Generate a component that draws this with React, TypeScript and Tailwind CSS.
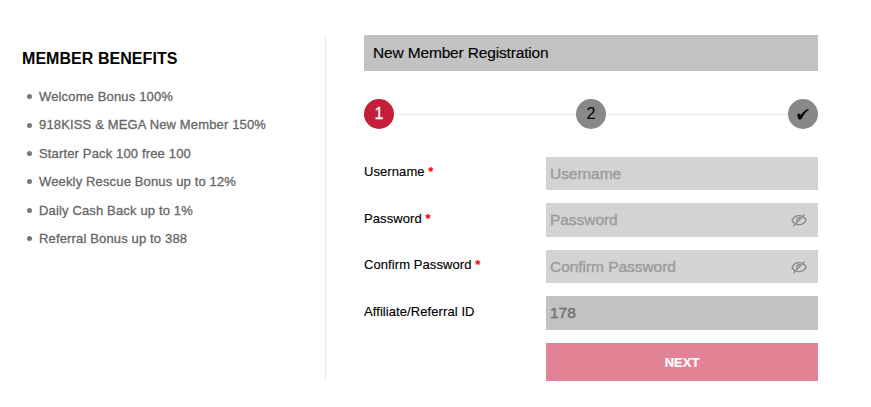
const benefits = [
    "Welcome Bonus 100%",
    "918KISS & MEGA New Member 150%",
    "Starter Pack 100 free 100",
    "Weekly Rescue Bonus up to 12%",
    "Daily Cash Back up to 1%",
    "Referral Bonus up to 388",
]

const fields = [
    { label: "Username", placeholder: "Username", required: true, secret: false },
    { label: "Password", placeholder: "Password", required: true, secret: true },
    { label: "Confirm Password", placeholder: "Confirm Password", required: true, secret: true },
]

const EyeOff = () => (
    <svg className="h-4 w-4" viewBox="0 0 16 16" fill="none" stroke="#888" strokeWidth="1.3" strokeLinecap="round">
        <path d="M5.800 12.300c3.900 1 7.500-.7 9.200-4.100-.5-1.400-1.400-2.600-2.800-3.300M10.200 3.900C6.200 2.900 2.900 4.800 1 8.200c.5 1.300 1.400 2.400 2.600 3.100" />
        <path d="M6.200 9.300c-.9-1.200-.4-3.100 1.200-3.500.6-.1 1.100 0 1.600.3" />
        <path d="M2.700 13.800 13.300 2.600" />
    </svg>
)

const Steps = () => (
    <div className="mt-7 flex h-[30px] items-center text-base text-black">
        <span className="flex h-[30px] w-[30px] items-center justify-center rounded-full bg-[#c41e3a] text-white [-webkit-text-stroke:0.3px]">1</span>
        <span className="mt-px h-px flex-1 bg-[#e9e9e9]" />
        <span className="flex h-[30px] w-[30px] items-center justify-center rounded-full bg-[#888]">2</span>
        <span className="mt-px h-px flex-1 bg-[#e9e9e9]" />
        <span className="flex h-[30px] w-[30px] items-center justify-center rounded-full bg-[#888]">
            <svg className="h-[11px] w-3" viewBox="0 0 13 12" fill="black" stroke="black" strokeWidth=".5">
                <path d="M.4 6.300C1.300 5 2.900 4.900 3.500 6l.5 1.300C6.100 4 8.600 1.500 12 .3l.5.600C9.300 3.200 6.800 6.400 5.100 10.200c-.6 1.200-3.100 1.600-3.600.3C1.100 9 .9 7.700.4 6.300Z" />
            </svg>
        </span>
    </div>
)

const App = () => {
    return (
        <div className="flex h-[407px] w-[871px] bg-white pt-[35px] font-['Liberation_Sans',Arial,sans-serif]">
            <aside className="h-[346px] w-[326px] border-r border-[#e9e9e9] pl-[22px] pt-3">
                <h2 className="text-base font-bold leading-[23px] tracking-[0.05px] text-black">MEMBER BENEFITS</h2>
                <ul className="mt-[12.5px] text-[13px] tracking-[0.15px] text-[#666] [-webkit-text-stroke:0.3px]">
                    {benefits.map((item) => (
                        <li key={item} className="flex h-[28.400px] items-center">
                            <span className="ml-[5px] mr-[7px] h-[5px] w-[5px] rounded-full bg-[#777]" />
                            {item}
                        </li>
                    ))}
                </ul>
            </aside>
            <main className="ml-[38px] w-[454px]">
                <h1 className="flex h-9 items-center bg-[#c2c2c2] px-[9px] text-[15.5px] tracking-[-0.16px] text-black [-webkit-text-stroke:0.15px]">New Member Registration</h1>
                <Steps />
                <form className="mt-[27.900px] flex flex-col gap-[13px] text-[13px] text-black">
                    {fields.map((field) => (
                        <div key={field.label} className="flex h-[33.500px]">
                            <label className="w-[182px] pt-[5.300px] tracking-[0.08px] [-webkit-text-stroke:0.15px]">
                                {field.label} {field.required && <span className="font-bold text-[#f00]">*</span>}
                            </label>
                            <div className="flex flex-1 items-center bg-[#d3d3d3] pl-1 pr-[11px]">
                                <input
                                    type={field.secret ? "password" : "text"}
                                    placeholder={field.placeholder}
                                    className="min-w-0 flex-1 bg-transparent pb-px text-[15.5px] tracking-[-0.05px] outline-none [-webkit-text-stroke:0.4px] placeholder:text-[#9c9c9c]"
                                />
                                {field.secret && <EyeOff />}
                            </div>
                        </div>
                    ))}
                    <div className="flex h-[33.500px]">
                        <label className="w-[182px] pt-[5.300px] tracking-[0.08px] [-webkit-text-stroke:0.15px]">Affiliate/Referral ID</label>
                        <input readOnly value="178" className="min-w-0 flex-1 bg-[#c2c2c2] px-1 pb-px text-[15.5px] text-[#707070] outline-none [-webkit-text-stroke:0.4px]" />
                    </div>
                    <button type="button" className="ml-[182px] h-[38px] bg-[#e18395] pt-px text-[13px] font-bold text-white [-webkit-text-stroke:0.2px]">NEXT</button>
                </form>
            </main>
        </div>
    )
}

export default App
